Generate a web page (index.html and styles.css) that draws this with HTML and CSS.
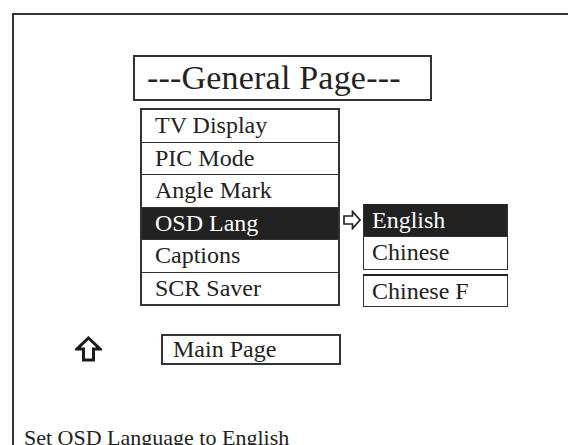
FILE: index.html
```html
<!DOCTYPE html>
<html>
<head>
<meta charset="utf-8">
<link rel="stylesheet" href="styles.css">
</head>
<body>
<div class="frame">
  <div class="title-box">---General Page---</div>
  <div class="menu-area">
    <div class="menu">
      <div class="row">TV Display</div>
      <div class="row">PIC Mode</div>
      <div class="row">Angle Mark</div>
      <div class="row selected">OSD Lang</div>
      <div class="row">Captions</div>
      <div class="row">SCR Saver</div>
    </div>
    <div class="pointer-group">
      <svg class="right-arrow" width="18" height="20" viewBox="0 0 18 20">
        <path d="M1 6 H9.5 V1.5 L17 10 L9.5 18.5 V14 H1 Z" fill="none" stroke="#222" stroke-width="1.7" stroke-linejoin="miter"/>
      </svg>
      <div class="sub">
        <div class="sub-box selected">English</div>
        <div class="sub-box">Chinese</div>
        <div class="sub-box separate">Chinese F</div>
      </div>
    </div>
  </div>
  <div class="main-row">
    <svg class="up-arrow" width="27" height="26" viewBox="0 0 27 26">
      <path d="M13.5 2 L25 13 H18.5 V24 H8.5 V13 H2 Z" fill="none" stroke="#1a1a1a" stroke-width="3" stroke-linejoin="miter"/>
    </svg>
    <div class="main-box">Main Page</div>
  </div>
  <div class="status">Set OSD Language to English</div>
</div>
</body>
</html>
```

FILE: styles.css
```css
html, body {
  margin: 0;
  padding: 0;
  background: #fff;
  overflow: hidden;
}

body {
  width: 568px;
  height: 445px;
  font-family: "Liberation Serif", "Times New Roman", serif;
  color: #222;
}

.frame {
  margin: 13px 0 0 12px;
  border-top: 2px solid #333;
  border-left: 2px solid #333;
  height: 520px;
  width: 620px;
}

.title-box {
  margin: 40px 0 0 119px;
  width: 299px;
  height: 46px;
  box-sizing: border-box;
  border: 2px solid #333;
  font-size: 34px;
  line-height: 41px;
  padding-left: 12px;
  letter-spacing: 0.2px;
}

.menu-area {
  display: flex;
  align-items: flex-start;
  margin: 7px 0 0 126px;
}

.menu {
  width: 200px;
  box-sizing: border-box;
  border: 2px solid #333;
}

.row {
  height: 31.5px;
  line-height: 31px;
  font-size: 24px;
  padding-left: 13px;
  border-top: 1.5px solid #333;
}

.row:first-child {
  border-top: none;
}

.row.selected,
.sub-box.selected {
  background: #222;
  color: #fff;
}

.pointer-group {
  display: flex;
  align-items: flex-start;
  margin-top: 96px;
}

.right-arrow {
  margin: 6px 0 0 3px;
}

.sub {
  margin-left: 2px;
  width: 145px;
}

.sub-box {
  height: 33px;
  line-height: 31px;
  box-sizing: border-box;
  border: 1.5px solid #333;
  border-top: none;
  font-size: 24px;
  padding-left: 8px;
}

.sub-box.selected {
  border-top: 1.5px solid #222;
}

.sub-box.separate {
  margin-top: 4px;
  border-top: 2px solid #222;
  height: 33px;
}

.main-row {
  display: flex;
  align-items: flex-start;
  margin: 27px 0 0 61px;
}

.up-arrow {
  margin-top: 2px;
}

.main-box {
  margin-left: 59px;
  width: 180px;
  height: 31px;
  box-sizing: border-box;
  border: 2px solid #333;
  font-size: 24px;
  line-height: 27px;
  padding-left: 10px;
}

.status {
  margin-top: 62px;
  padding-left: 10px;
  font-size: 22px;
  line-height: 22px;
}
```
